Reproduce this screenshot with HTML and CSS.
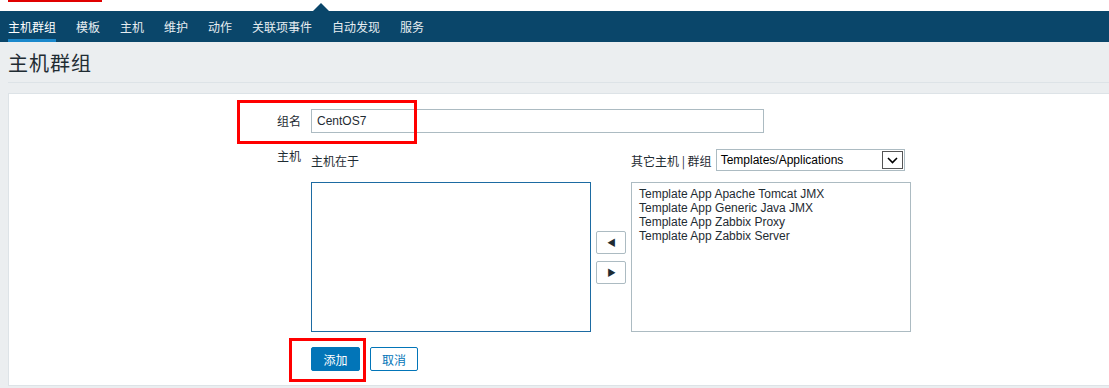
FILE: index.html
```html
<!DOCTYPE html>
<html lang="zh-CN">
<head>
  <meta charset="UTF-8">
  <title>主机群组</title>
  <link rel="stylesheet" href="styles.css">
</head>
<body>
  <div class="top-strip"><span class="mark"></span></div>
  <nav class="top-nav">
    <a class="active">主机群组</a>
    <a>模板</a>
    <a>主机</a>
    <a>维护</a>
    <a>动作</a>
    <a>关联项事件</a>
    <a>自动发现</a>
    <a>服务</a>
    <span class="notch"></span>
  </nav>

  <div class="header">
    <h1>主机群组</h1>
  </div>

  <div class="content">
    <div class="form-grid">
      <label class="lbl lbl-mid">组名</label>
      <div class="field">
        <input type="text" class="text-input" value="CentOS7">
        <span class="note note-name"></span>
      </div>

      <label class="lbl lbl-top">主机</label>
      <div class="field hosts">
        <div class="col">
          <div class="col-head">主机在于</div>
          <div class="listbox focused"></div>
        </div>
        <div class="move-btns">
          <button class="arrow-btn">&#9664;</button>
          <button class="arrow-btn">&#9654;</button>
        </div>
        <div class="col">
          <div class="col-head">
            其它主机 | 群组
            <div class="select">
              <span>Templates/Applications</span>
              <span class="drop">
                <svg width="11" height="7" viewBox="0 0 11 7"><path d="M1 1 L5.5 5.5 L10 1" fill="none" stroke="#000" stroke-width="1.6"/></svg>
              </span>
            </div>
          </div>
          <div class="listbox">
            <div>Template App Apache Tomcat JMX</div>
            <div>Template App Generic Java JMX</div>
            <div>Template App Zabbix Proxy</div>
            <div>Template App Zabbix Server</div>
          </div>
        </div>
      </div>

      <div></div>
      <div class="field actions">
        <button class="btn primary">添加</button>
        <button class="btn alt">取消</button>
        <span class="note note-add"></span>
      </div>
    </div>
  </div>
</body>
</html>
```

FILE: styles.css
```css
* { box-sizing: border-box; }
body {
  margin: 0;
  font-family: "Liberation Sans", Arial, "Noto Sans CJK SC", sans-serif;
  font-size: 12px;
  color: #1f2c33;
  background-color: #ebeef0;
  height: 388px;
  overflow: hidden;
}
.top-strip {
  height: 11px;
  background: #ffffff;
  position: relative;
}
.top-strip .mark {
  position: absolute;
  left: 8px;
  top: 0;
  width: 94px;
  height: 2px;
  background: #e00000;
}
.top-nav {
  position: relative;
  z-index: 1;
  display: flex;
  height: 31px;
  padding-left: 8px;
  background-color: #0a466a;
}
.top-nav a {
  display: flex;
  align-items: center;
  margin-right: 20px;
  color: #e6edf1;
  font-family: "Noto Sans CJK SC", sans-serif;
  font-size: 12px;
  border-bottom: 3px solid transparent;
  padding-top: 3px;
}
.top-nav a.active {
  color: #ffffff;
  border-bottom-color: #1a88cc;
}
.top-nav .notch {
  position: absolute;
  left: 313px;
  top: -8px;
  width: 0;
  height: 0;
  border-left: 8px solid transparent;
  border-right: 8px solid transparent;
  border-bottom: 8px solid #0a466a;
}
.header {
  margin-left: 8px;
  height: 41px;
  border-bottom: 1px solid #dde3e7;
  display: flex;
  align-items: center;
}
.header h1 {
  margin: 0;
  font-family: "Noto Sans CJK SC", sans-serif;
  font-weight: normal;
  font-size: 20px;
  color: #1f2c33;
  letter-spacing: 1px;
}
.content {
  margin: 10px 0 0 8px;
  background: #ffffff;
  border: 1px solid #dde3e7;
  border-right: none;
  height: 293px;
  padding-top: 15px;
}
.form-grid {
  display: grid;
  grid-template-columns: 292px 1fr;
  column-gap: 10px;
}
.lbl {
  text-align: right;
  font-family: "Noto Sans CJK SC", sans-serif;
}
.lbl-mid { line-height: 24px; }
.lbl-top { margin-top: 16px; line-height: 14px; }
.field { position: relative; }
.text-input {
  width: 453px;
  height: 24px;
  border: 1px solid #acbbc2;
  padding: 0 5px;
  font-family: inherit;
  font-size: 12px;
  color: #1f2c33;
  display: block;
}
.note {
  position: absolute;
  border: 3px solid #ff0000;
}
.note-name {
  left: -74px;
  top: -9px;
  width: 180px;
  height: 44px;
}
.note-add {
  left: -22px;
  top: -9px;
  width: 77px;
  height: 44px;
}
.hosts {
  display: flex;
  margin-top: 16px;
}
.col { width: 280px; }
.col-head {
  height: 22px;
  margin-bottom: 11px;
  display: flex;
  align-items: center;
  font-family: "Noto Sans CJK SC", sans-serif;
}
.select {
  margin-left: 4px;
  width: 189px;
  height: 22px;
  border: 1px solid #acbbc2;
  display: flex;
  align-items: center;
  justify-content: space-between;
  padding: 0 1px 0 4px;
  font-family: "Liberation Sans", Arial, sans-serif;
  color: #000;
}
.select .drop {
  width: 21px;
  height: 18px;
  border: 1px solid #555;
  display: flex;
  align-items: center;
  justify-content: center;
}
.listbox {
  width: 280px;
  height: 150px;
  border: 1px solid #acbbc2;
  padding: 4px 7px;
  line-height: 14px;
  color: #1f2c33;
}
.listbox.focused { border-color: #1d6ba2; }
.move-btns {
  width: 40px;
  display: flex;
  flex-direction: column;
  justify-content: center;
  align-items: center;
  gap: 7px;
  padding-top: 33px;
}
.arrow-btn {
  width: 30px;
  height: 23px;
  border: 1px solid #acbbc2;
  border-radius: 2px;
  background: #ffffff;
  font-size: 9px;
  color: #1f2c33;
  padding: 0;
}
.actions {
  display: flex;
  gap: 10px;
  margin-top: 15px;
}
.btn {
  height: 24px;
  padding: 0 10px;
  border-radius: 2px;
  font-family: "Noto Sans CJK SC", sans-serif;
  font-size: 12px;
  cursor: pointer;
}
.primary {
  width: 49px;
  background-color: #0275b8;
  border: 1px solid #0275b8;
  color: #ffffff;
}
.alt {
  width: 48px;
  background-color: #ffffff;
  border: 1px solid #0275b8;
  color: #0275b8;
}
```
